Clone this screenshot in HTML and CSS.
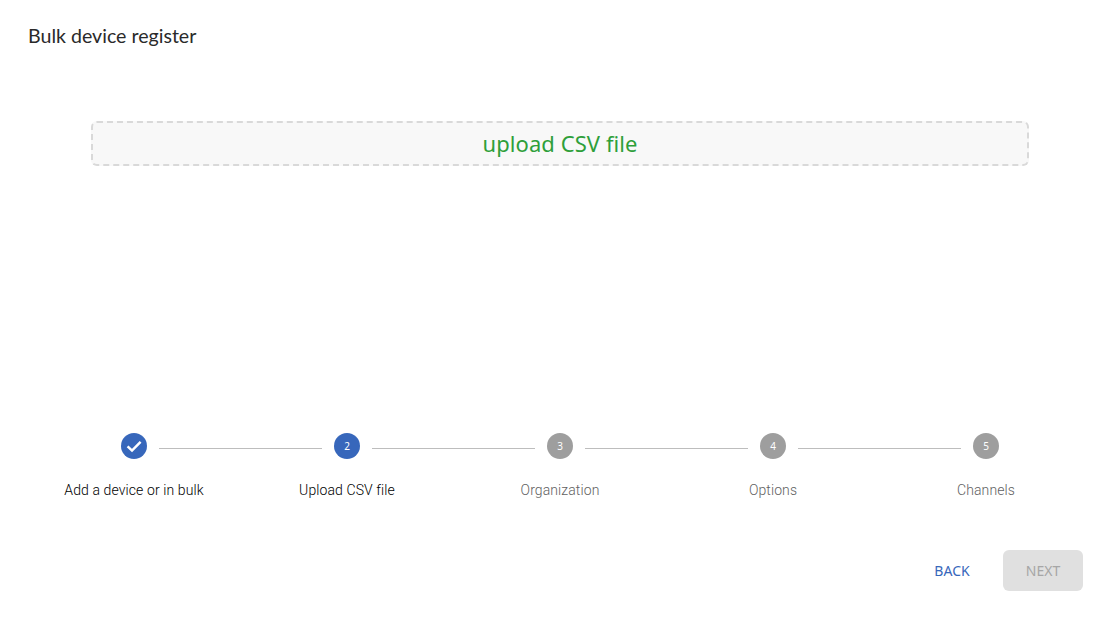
FILE: index.html
```html
<!DOCTYPE html>
<html lang="en">
<head>
<meta charset="utf-8">
<title>Bulk device register</title>
<link rel="stylesheet" href="styles.css">
</head>
<body>
<main class="page">
  <h1 class="title">Bulk device register</h1>
  <div class="dropzone">upload CSV file</div>
  <section class="stepper">
    <div class="track">
      <span class="dot dot-active">
        <svg class="check" viewBox="0 0 18 18" width="18" height="18"><path d="M2.6 9.4 7 13.6 15.6 4.8" fill="none" stroke="#fff" stroke-width="2.5"/></svg>
      </span>
      <span class="line"></span>
      <span class="dot dot-active">2</span>
      <span class="line"></span>
      <span class="dot">3</span>
      <span class="line"></span>
      <span class="dot">4</span>
      <span class="line"></span>
      <span class="dot">5</span>
    </div>
    <div class="labels">
      <span class="label label-active">Add a device or in bulk</span>
      <span class="label label-active">Upload CSV file</span>
      <span class="label">Organization</span>
      <span class="label">Options</span>
      <span class="label">Channels</span>
    </div>
  </section>
  <footer class="actions">
    <button class="btn btn-back" type="button">BACK</button>
    <button class="btn btn-next" type="button" disabled>NEXT</button>
  </footer>
</main>
</body>
</html>
```
FILE: styles.css
```css
* { box-sizing: border-box; }
html, body { margin: 0; height: 100%; background: #fff; overflow: hidden; }
.page { width: 1120px; height: 626px; display: flex; flex-direction: column; font-family: "Noto Sans", sans-serif; }
.title { margin: 23px 0 0 28px; font: 400 19.6px/26px Lato, sans-serif; color: #2a2a2a; }
.dropzone {
  margin: 72px 91px 0 91px; width: 938px; height: 45px;
  display: flex; align-items: center; justify-content: center;
  padding-bottom: 2px;
  background: #f8f8f8; border: 2px dashed #d9d9d9; border-radius: 6px;
  color: #2e9f3a; font-size: 22px; line-height: 30px; letter-spacing: 0.07px;
}
.stepper { margin-top: 267px; }
.track { display: flex; align-items: center; padding: 0 121px; height: 26px; }
.dot {
  flex: none; width: 26px; height: 26px; border-radius: 50%;
  display: flex; align-items: center; justify-content: center;
  background: #9e9e9e; color: #fff; font-size: 10px;
}
.dot-active { background: #3767bb; }
.line { flex: 1; height: 1px; margin: 4px 12px 0; background: #bdbdbd; }
.labels { display: grid; grid-template-columns: repeat(5, 213px); padding: 0 27.5px; margin-top: 21px; }
.label { text-align: center; font: 300 14px/20px Roboto, sans-serif; letter-spacing: 0.1px; color: #616161; }
.label-active { color: #000; }
.actions { display: flex; justify-content: flex-end; align-items: center; gap: 19px; margin: 50px 37px 0 0; }
.btn { font: 400 14px/20px "Noto Sans", sans-serif; border: 0; height: 41px; border-radius: 6px; }
.btn-back { width: 64px; padding: 0; background: none; color: #3767bb; }
.btn-next { width: 80px; padding: 0; background: #e0e0e0; color: #a6a6a6; }
```
